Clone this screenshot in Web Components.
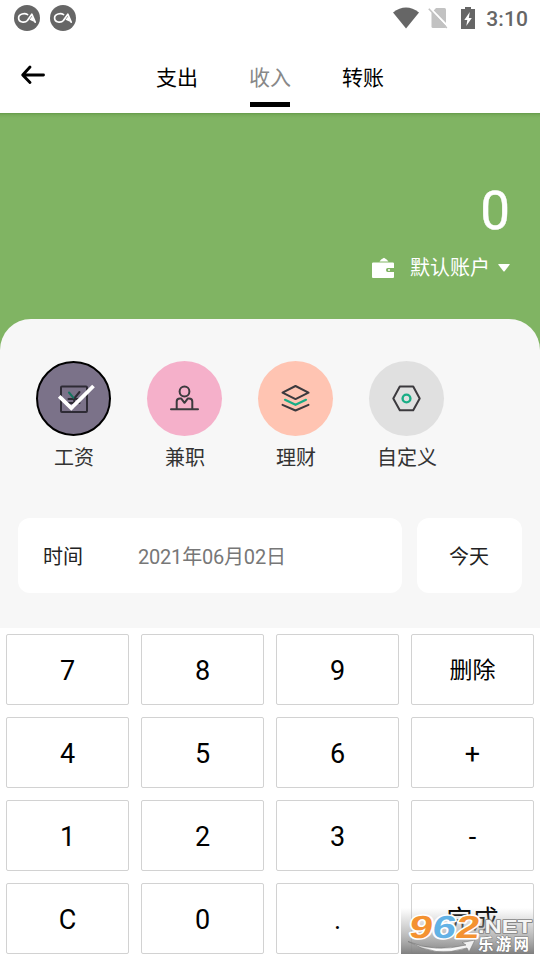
<!DOCTYPE html>
<html lang="zh-CN">
<head>
<meta charset="utf-8">
<title>记账</title>
<style>
html,body{margin:0;padding:0;background:#fff}
body{width:540px;height:960px;overflow:hidden;font-family:Roboto,"Noto Sans CJK SC",sans-serif;color:#000}
</style>
</head>
<body>
<entry-app></entry-app>
<script>
function define(name, html) {
  const t = document.createElement('template');
  t.innerHTML = html;
  customElements.define(name, class extends HTMLElement {
    constructor() {
      super();
      this.attachShadow({ mode: 'open' }).append(t.content.cloneNode(true));
    }
  });
}

const badge = `<svg width="26" height="26" viewBox="0 0 26 26"><circle cx="13" cy="13" r="13" fill="#666"/><path d="M13.600 9.600C11 8 4.600 8.400 4.600 13s6.400 5.300 8.800 2.500L17.800 9.200l3.400 8" fill="none" stroke="#fff" stroke-width="1.700" stroke-linejoin="round" stroke-linecap="round"/><path d="M15.500 14.800l2.700-3.600 2.400 5.900z" fill="#fff"/></svg>`;

define('status-bar', `<style>
:host{display:flex;height:36px;padding:0 12px 0 14px;box-sizing:border-box;align-items:center;color:#666}
svg{display:block;flex:none}
.left{display:flex;gap:10px;flex:1}
.wifi{margin-right:9px}.sim{margin-right:13px}.bat{margin-right:11px}
time{font-size:21px;font-weight:500;line-height:24px;letter-spacing:.1px;padding-top:2px}
</style>
<div class="left">${badge}${badge}</div>
<svg class="wifi" width="26" height="22" viewBox="0 0 26 22"><path d="M0 5.500Q13-4.500 26 5.500L13 21.500z" fill="#666"/></svg>
<svg class="sim" width="20" height="22" viewBox="0 0 20 22"><path d="M8 1h8.500q1.500 0 1.500 1.500v17q0 1.500-1.500 1.500H5q-1.500 0-1.500-1.500V6z" fill="#c2c2c2"/><path d="M1.500 .500l18.500 19" stroke="#fff" stroke-width="2"/><path d="M.8 1.800L18.800 21" stroke="#c2c2c2" stroke-width="1.600"/></svg>
<svg class="bat" width="14" height="22" viewBox="0 0 14 22"><path d="M4 0h6v2h4v20H0V2h4z" fill="#666"/><path d="M8.800 5L3.300 13h3L5.300 19l5.500-8h-3z" fill="#fff"/></svg>
<time>3:10</time>`);

define('nav-tab', `<style>
:host{display:flex;flex-direction:column;justify-content:space-between;align-items:center;width:93px;height:71px;font-size:21px;line-height:30px;padding-top:26.500px;box-sizing:border-box}
:host([selected]){color:#888}
i{display:block;width:40px;height:5px;background:none}
:host([selected]) i{background:#000}
</style><span><slot></slot></span><i></i>`);

define('nav-bar', `<style>
:host{display:flex;height:77px;box-sizing:border-box}
svg{display:block;margin:28px 84.500px 0 20px;flex:none}
nav{display:flex}
</style>
<svg width="26" height="22" viewBox="0 0 26 22"><path d="M10 3L2.700 11 10 18.500M3 11h20.500" fill="none" stroke="#000" stroke-width="2.900" stroke-linecap="round" stroke-linejoin="round"/></svg>
<nav><nav-tab>支出</nav-tab><nav-tab selected>收入</nav-tab><nav-tab>转账</nav-tab></nav>`);

define('amount-panel', `<style>
:host{display:flex;flex-direction:column;align-items:flex-end;height:247px;box-sizing:border-box;background:linear-gradient(#659b4a,#78ac5b 2px,#80b463 5px);color:#fff;padding:64px 30px 0 0}
.amount{font-size:53px;line-height:68px;font-weight:400;-webkit-text-stroke:.4px #fff}
.account{display:flex;align-items:center;margin-top:8px;font-size:20px;line-height:28px}
.wallet{margin-right:16px}.arrow{margin-left:8px}
svg{display:block}
span{padding-top:1px}
</style>
<div class="amount">0</div>
<div class="account">
<svg class="wallet" width="22" height="22" viewBox="0 0 22 22"><path d="M7.500 4.500q1-2 4.500-3.800 3 1.800 4.500 3.800zM1.200 5.500h19.600q1.200 0 1.200 1v4.500h-6.300q-1.700 0-1.700 2t1.700 2H22v5q0 1-1 1H1q-1 0-1-1V6.500q0-1 1.200-1z" fill="#fff"/><path d="M16 12.300h2v1.500h-2z" fill="#fff"/></svg>
<span>默认账户</span>
<svg class="arrow" width="12" height="8" viewBox="0 0 12 8"><path d="M.8 0h10.400q1 0 .4.800L6.600 7.200q-.6.700-1.200 0L.4.800q-.5-.8.400-.8z" fill="#fff"/></svg>
</div>`);

define('category-item', `<style>
:host{display:flex;flex-direction:column;align-items:center;width:75px;font-size:20px;line-height:28px;color:#333}
.disc{display:flex;width:75px;height:75px;box-sizing:border-box;border-radius:50%;background:var(--disc);align-items:center;justify-content:center;margin-bottom:7.500px}
:host([selected]) .disc{border:2px solid #000}
span{white-space:nowrap;padding-left:1px}
</style><div class="disc"><slot name="icon"></slot></div><span><slot></slot></span>`);

define('category-list', `<style>
:host{display:flex;gap:36px;padding:0 36px}
svg{display:block;fill:none;stroke:#3c3a3e;stroke-width:2;stroke-linejoin:round;stroke-linecap:round}
</style>
<category-item selected style="--disc:#7b7289"><svg slot="icon" width="50" height="40" viewBox="0 0 50 40"><rect x="12" y="7.500" width="26" height="25.500" rx="1" stroke="#2e2b35"/><path d="M30.500 13l-5.300 6.500v8M19.500 20h11M19.500 24h11" stroke="#2e2b35"/><path d="M20 13.500l4.300 5.200" stroke="#177561"/><path d="M10.200 17.300L22.300 29 44.500 7" stroke="#fff" stroke-width="3.800" stroke-linecap="butt" stroke-linejoin="miter"/></svg>工资</category-item>
<category-item style="--disc:#f5b0ca"><svg slot="icon" width="30" height="30" viewBox="0.500 0.500 30 30"><circle cx="15" cy="8" r="4.900"/><path d="M1.500 25.700h27M7.200 25V18q0-2.900 3.300-2.900h1.300L15 19.300l3.200-4.200h1.300q3.300 0 3.300 2.900v7"/></svg>兼职</category-item>
<category-item style="--disc:#ffc4b2"><svg slot="icon" width="30" height="30" viewBox="0.500 0.500 30 30"><path d="M15 2.500l13 6.700L15 15.600 2 9.200zM2 21.300L15 27l13-5.700"/><path d="M4.500 16.300L15 21.300l10.500-5" stroke="#18ad85" stroke-width="2.200"/></svg>理财</category-item>
<category-item style="--disc:#e0e0e0"><svg slot="icon" width="30" height="30" viewBox="0.500 0.500 30 30"><path d="M8.300 3.100h13.400L28.200 15l-6.500 11.800H8.300L1.800 15z"/><circle cx="15" cy="15" r="3.900" stroke="#18ad85" stroke-width="2.400"/></svg>自定义</category-item>`);

define('date-row', `<style>
:host{display:flex;gap:15px;padding:0 18px;font-size:20px;line-height:28px;color:#222}
div{display:flex;align-items:center;height:75px;border-radius:12px;background:#fff;box-sizing:border-box;padding-top:2px}
.date{width:384px;padding-left:25px;gap:55px}
.date b{font-weight:400;color:#777;letter-spacing:-.2px}
.today{width:105px;justify-content:center;padding-right:1px}
</style><div class="date"><span>时间</span><b>2021年06月02日</b></div><div class="today">今天</div>`);

define('entry-sheet', `<style>
:host{display:flex;flex-direction:column;gap:46.500px;height:309px;margin-top:-41px;padding-top:42px;box-sizing:border-box;border-radius:31px 31px 0 0;background:#f7f7f7}
</style><category-list></category-list><date-row></date-row>`);

define('pad-key', `<style>
:host{display:flex;align-items:center;justify-content:center;height:71px;box-sizing:border-box;border:1px solid #d2d2d2;border-radius:2px;background:#fff;font-size:27px;line-height:32px}
:host([wide]){font-size:23px}
span{padding-top:2px}
</style><span><slot></slot></span>`);

define('key-pad', `<style>
:host{display:grid;grid-template-columns:repeat(4,1fr);gap:12px;padding:6px}
</style>
<pad-key>7</pad-key><pad-key>8</pad-key><pad-key>9</pad-key><pad-key wide>删除</pad-key>
<pad-key>4</pad-key><pad-key>5</pad-key><pad-key>6</pad-key><pad-key>+</pad-key>
<pad-key>1</pad-key><pad-key>2</pad-key><pad-key>3</pad-key><pad-key>-</pad-key>
<pad-key>C</pad-key><pad-key>0</pad-key><pad-key>.</pad-key><pad-key style="font-size:26px">完成</pad-key>`);

define('site-mark', `<style>
:host{display:block;position:absolute;left:401px;top:908px;width:133px;height:46px}
svg{display:block;overflow:visible}
text{paint-order:stroke;stroke-linejoin:round}
.n{font:700 32px "Liberation Sans",sans-serif}
</style>
<svg width="133" height="46" viewBox="0 0 133 46">
<defs><linearGradient id="shade" x1="0" y1="0" x2="0" y2="1"><stop offset="0" stop-color="#aaa" stop-opacity="0"/><stop offset=".5" stop-color="#aaa" stop-opacity=".65"/><stop offset="1" stop-color="#7c7c7c" stop-opacity=".97"/></linearGradient>
<linearGradient id="sw"><stop offset="0" stop-color="#aaa"/><stop offset=".4" stop-color="#fff"/><stop offset="1" stop-color="#eee"/></linearGradient></defs>
<rect width="133" height="46" fill="url(#shade)"/>
<path d="M7 33.500Q34 45 65 37l-4-2.500 13-2.500-6 12-2-4Q34 50 7 33.500z" fill="url(#sw)" stroke="#777" stroke-width=".6"/>
<g class="n" transform="translate(7 29.500) skewX(-9)" stroke="#fff" stroke-width="3">
<text textLength="70" lengthAdjust="spacingAndGlyphs"><tspan fill="#f49231">9</tspan><tspan fill="#62b2e5">6</tspan><tspan fill="#f49231">2</tspan></text>
</g>
<text x="77" y="24.500" textLength="54" lengthAdjust="spacingAndGlyphs" font-family="Liberation Sans,sans-serif" font-weight="700" font-size="19" fill="#f5f5f5" stroke="#858585" stroke-width="1.600">.NET</text>
<text x="77" y="42" textLength="51" lengthAdjust="spacing" font-family="Noto Sans CJK SC,sans-serif" font-weight="700" font-size="15.500" fill="#fff" stroke="#777" stroke-width="1">乐游网</text>
</svg>`);

define('entry-app', `<style>
:host{display:block;position:relative;width:540px;height:960px;background:#fff;overflow:hidden}
</style><status-bar></status-bar><nav-bar></nav-bar><amount-panel></amount-panel><entry-sheet></entry-sheet><key-pad></key-pad><site-mark></site-mark>`);
</script>
</body>
</html>
